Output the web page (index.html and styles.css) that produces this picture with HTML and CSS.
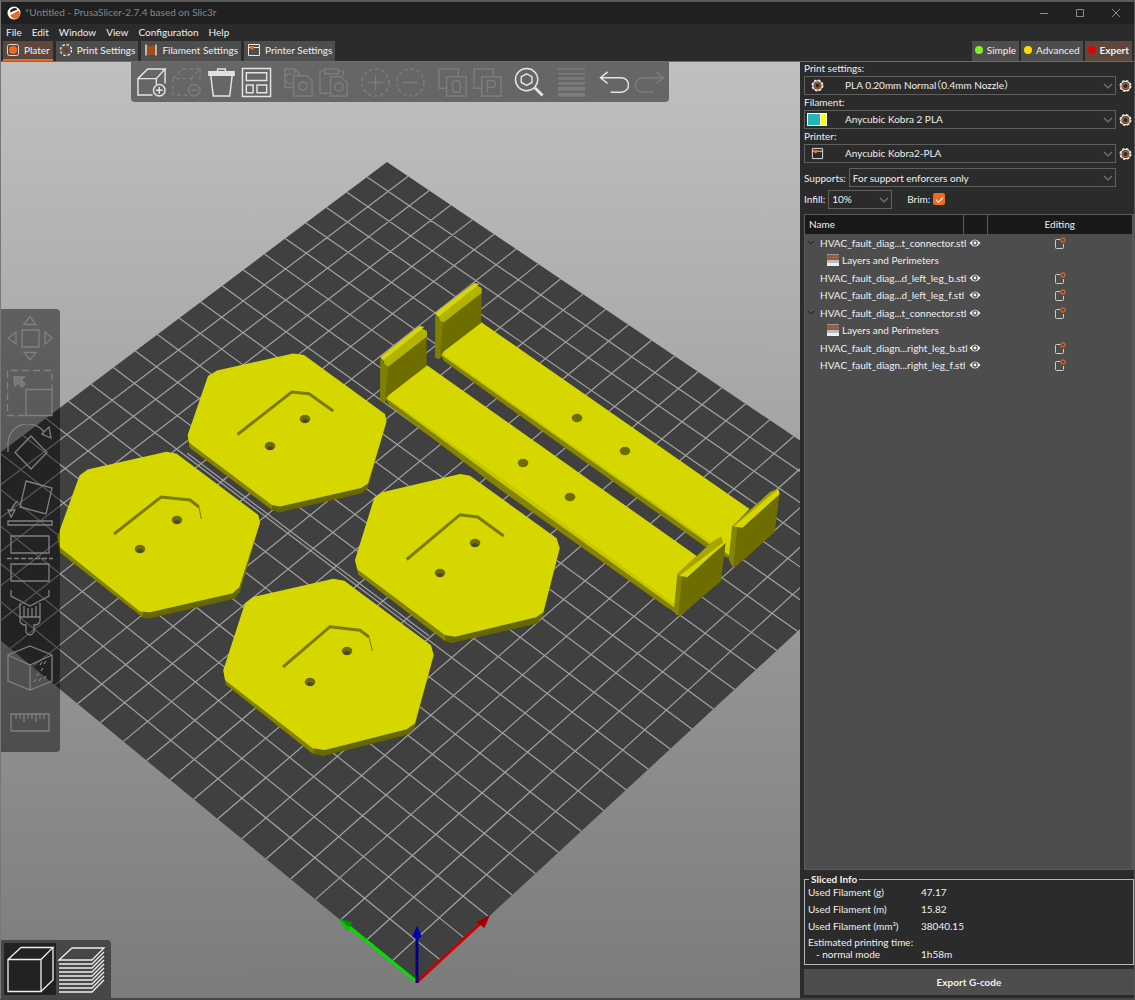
FILE: index.html
```html
<!DOCTYPE html>
<html lang="en">
<head>
<meta charset="utf-8">
<title>*Untitled - PrusaSlicer-2.7.4 based on Slic3r</title>
<link rel="stylesheet" href="styles.css">
</head>
<body>
<svg class="defs" aria-hidden="true">
  <symbol id="chev" viewBox="0 0 10 6"><path d="M1 1l4 4 4-4" fill="none" stroke="currentColor" stroke-width="1.200"/></symbol>
  <symbol id="gear" viewBox="0 0 14 14"><circle cx="7" cy="7" r="5.8" fill="none" stroke="#eee" stroke-width="1.4" stroke-dasharray="2.6 1.95"/><circle cx="7" cy="7" r="4.900" fill="none" stroke="#eee" stroke-width="1.300"/><circle cx="7" cy="7" r="3" fill="#2b2b2b" stroke="#a4562c" stroke-width="1.8"/></symbol>
  <symbol id="printer" viewBox="0 0 14 14"><path d="M1.5 1.5h11v11h-11zM1.500 4.500h11" fill="none" stroke="#e8e8e8"/><path d="M3 3h4v2.500l-2 1.500-2-1.500z" fill="#ed6b21"/></symbol>
  <symbol id="eye" viewBox="0 0 12 10"><path d="M.5 5Q6-2 11.500 5Q6 12 .5 5z" fill="#f4f4f4"/><circle cx="6" cy="5" r="2.700" fill="#4d4d4d"/><circle cx="6" cy="5" r="1.400" fill="#f4f4f4"/></symbol>
  <symbol id="edit" viewBox="0 0 12 12"><path d="M6 2.500H2.500Q1.500 2.500 1.500 3.500V10.500Q1.500 11.500 2.500 11.500H8.500Q9.500 11.500 9.500 10.500V7" fill="none" stroke="#ccc"/><circle cx="9" cy="3" r="2" fill="none" stroke="#c8602a" stroke-width="1.500"/></symbol>
  <symbol id="layers" viewBox="0 0 12 12"><path d="M0 0h12v1H0z" fill="#999"/><path d="M0 1h12v5H0z" fill="#98593a"/><path d="M0 3h12v1H0z" fill="#a8603c"/><path d="M0 6h12v3H0z" fill="#bbb"/><path d="M0 9h12v3H0z" fill="#eee"/></symbol>
</svg>
<div class="window">
  <header class="titlebar">
    <svg class="logo" viewBox="0 0 14 14"><circle cx="7" cy="7" r="6.500" fill="#fff"/><path d="M3 6.500A4.300 4.300 0 0 1 10.500 3.500z" fill="#222"/><path d="M3 9.500L11.500 4.500A4.600 4.600 0 0 1 5 11.500z" fill="#ed6b21"/></svg>
    <span class="title">*Untitled - PrusaSlicer-2.7.4 based on Slic3r</span>
    <div class="winctl">
      <button aria-label="Minimize"><svg viewBox="0 0 10 10"><path d="M1 5.500h8"/></svg></button>
      <button aria-label="Maximize"><svg viewBox="0 0 10 10"><path d="M1.500 1.500h7v7h-7z"/></svg></button>
      <button aria-label="Close"><svg viewBox="0 0 10 10"><path d="M1 1l8 8M9 1l-8 8"/></svg></button>
    </div>
  </header>
  <nav class="menubar">
    <a href="#">File</a><a href="#">Edit</a><a href="#">Window</a><a href="#">View</a><a href="#">Configuration</a><a href="#">Help</a>
  </nav>
  <div class="tabbar">
    <button class="tab active"><svg viewBox="0 0 14 14"><rect x="1.500" y="1.500" width="11" height="11" rx="2" fill="none" stroke="#ddd"/><circle cx="7" cy="7" r="4" fill="#ed6b21"/></svg>Plater</button>
    <button class="tab"><svg viewBox="0 0 14 14"><circle cx="7" cy="7" r="5.500" fill="none" stroke="#eee" stroke-dasharray="2.600 1.700" stroke-width="1.300"/><circle cx="7" cy="7" r="3.600" fill="#5c4638" stroke="#85533a"/></svg>Print Settings</button>
    <button class="tab"><svg viewBox="0 0 14 14"><path d="M3 3h8v9H3z" fill="#a04e1e"/><path d="M2 1.500v11M12 1.500v11" stroke="#eee" stroke-width="1.300"/></svg>Filament Settings</button>
    <button class="tab"><svg><use href="#printer"/></svg>Printer Settings</button>
    <div class="modes">
      <button class="tab mode"><i class="dot green"></i>Simple</button>
      <button class="tab mode"><i class="dot yellow"></i>Advanced</button>
      <button class="tab mode expert"><i class="dot red"></i>Expert</button>
    </div>
  </div>
  <main class="body">
    <section class="view">
      <svg class="scene" viewBox="1 62 799 936" preserveAspectRatio="xMidYMid slice">
        <polygon points="387,162 918,520 417,983 -119,542" fill="#404040"/>
        <path id="grid" fill="none" stroke="#a2a2a2" stroke-width="1.200"/>
        <g id="plates">
          <path fill="#676700" d="M187.700 435L189.500 447.500 272 510 279 512.500 363 493 368 487 386.500 421.500 279 480z"/>
          <path fill="#838300" d="M187.700 435L189.500 447.500 272 510V500z"/>
          <path class="top" d="M208 376L217 370.500 293 353.500 304 355 385 414 386.500 421.500 368 483.500 361 488 280 506.500 272 505 189 442.500 187.700 435z"/>
          <path fill="#676700" d="M57.300 537L60 552.500 143 617.500 149.500 618.500 235 598.500 240 592 260 523 150 590z"/>
          <path fill="#838300" d="M57.300 537L60 552.500 143 617.500V605z"/>
          <path class="top" d="M79.500 475.500L87.500 469.500 166.500 451.700 176.700 453.700 258.300 515 260 522.700 239.300 587.300 232.700 593.300 150 612.300 140 611.500 59.500 547 57.300 537z"/>
          <path fill="#676700" d="M355 560L358.300 574.500 445 641 452 643 537 623.500 543 616 559.700 548.300 450 610z"/>
          <path fill="#838300" d="M355 560L358.300 574.500 445 641V625z"/>
          <path class="top" d="M374.300 497.700L382.300 492.300 460 474 470 475.700 556.700 538.300 559.700 548.300 543.300 612.300 536 617.300 455 636.700 445 635 357.300 569.300 355 560z"/>
          <path fill="#676700" d="M223.300 670L226 684.500 313.300 754 323.300 756 408.300 734.500 414.300 728.500 433.700 655 320 720z"/>
          <path fill="#838300" d="M223.300 670L226 684.500 313.300 754V740z"/>
          <path class="top" d="M245 603.300L253.300 597 333.300 578.700 344.300 580.700 431 645.300 433.700 655 415 723.300 406.700 729.300 325 750 312.700 748.300 225 680 223.300 670z"/>
        </g>
        <g fill="none" stroke="#7b7b00" stroke-width="3">
          <path d="M237.500 434.500L291.700 392 309 393.700 333.300 411"/>
          <path d="M114 534L161 497 190 500 199 507"/>
          <path d="M406.700 559.500L460 514.700 477.700 517 503.700 536"/>
          <path d="M283 667L330 626.700 360 630.300 369 637"/>
          <path stroke-width="1" d="M199 507L201.300 519M369 637L372.300 651"/>
        </g>
        <g id="arm-back">
          <path fill="#848400" d="M440 354L444 361 540 430 705 546.500 728 558 740 530 481 330z"/>
          <path fill="#c8c800" d="M440 354L715 548 735 545 481 330z"/>
          <path class="top" d="M481 322L749.500 509 732 527 730 556 715 545 441 353z"/>
          <path fill="#808000" d="M435.300 313L440 321 443.500 322.500V352L439.500 359 435 357.700z"/>
          <path fill="#6e6e00" d="M443 322.500L481.700 292 481 323 443 352 440 354.500z"/>
          <path fill="#b2b200" d="M438 316L476 285 481.700 288V293L443.500 322.500 440 321z"/>
          <path class="top" d="M435.300 313L474.300 283 479.300 284 438 317z"/>
          <path fill="#858500" d="M732.300 526L742 528 735 567.300 732 566 728.500 559z"/>
          <path fill="#6e6e00" d="M737 528L742.700 527.500 779.500 493.500 774.700 532 735 567.300 733.500 566.500z"/>
          <path fill="#a6a600" d="M732 526L770.700 491.500 778 489 737 526z"/>
          <path class="top" d="M734 526.500L778.300 489 779.700 494 742.500 527.800z"/>
        </g>
        <g id="arm-front">
          <path fill="#848400" d="M385 398L390 406 500 489.500 667 607.500 674.500 611 680 590 427 373z"/>
          <path fill="#c8c800" d="M385 397.500L500 482 675 608 690 580 427 372z"/>
          <path class="top" d="M426.700 365L696.700 556 677.500 574 674.500 604 500 477 386 397z"/>
          <path fill="#808000" d="M380.300 357L385 365 388.500 366.500V395.500L384.500 402.500 380 401z"/>
          <path fill="#6e6e00" d="M388 366.500L426.700 336 426.500 366 388 395.500 385 398z"/>
          <path fill="#b2b200" d="M383 360L421 328 427 331V336.500L388.500 366.500 385 365z"/>
          <path class="top" d="M380.300 357L419.300 326 424.300 327 383 360.500z"/>
          <path fill="#858500" d="M677.300 574L687 577 680 615.700 676 614.500 674 609z"/>
          <path fill="#6e6e00" d="M682 577L687.300 577 725.700 542.700 721 581 680 615.700 678.500 615z"/>
          <path fill="#a6a600" d="M677 574L713 541 721.500 536.500 723 543 682 577z"/>
          <path class="top" d="M680 575.500L722.500 543 725.700 542.500 687.300 577.300z"/>
        </g>
        <g fill="#6c6c00" id="holes"></g>
        <g stroke-width="3" fill="none">
          <path stroke="#00e000" d="M417 982L347 925"/><path stroke="#c80000" d="M417 982L482 922"/>
        </g>
        <path fill="#009800" d="M339 918.500L352.500 922.500 347 930.500z"/><path fill="#00c800" d="M339 918.500L350 928 346.500 931z"/>
        <path fill="#a00000" d="M490 915L484.500 928 476 922z"/>
        <path stroke="#000080" stroke-width="3" d="M417 983V936"/><path fill="#0000b4" d="M417 925.500L421.500 936.500Q417 941 412.500 936.500z"/>
      </svg>

      <div class="toolbar" role="toolbar" aria-label="Main toolbar">
        <div class="group">
          <button aria-label="Add"><svg viewBox="0 0 32 32"><path d="M17 29H2V12H21V18M2 12L12 2H30L21 12M30 2V17"/><circle cx="24" cy="24" r="6"/><path d="M24 20.500v7M20.500 24h7"/></svg></button>
          <button class="off" aria-label="Delete"><svg viewBox="0 0 32 32"><path stroke-dasharray="4 3" d="M17 29H2V12H21V18M2 12L12 2H30L21 12M30 2V17"/><circle cx="24" cy="24" r="6"/><path d="M20.500 24h7"/></svg></button>
          <button aria-label="Delete all"><svg viewBox="0 0 32 32"><path d="M5 9L7.500 30H24.500L27 9"/><path d="M3 8.500V5H29V8.500z" fill="#ddd"/><path d="M12 4.500V2H20V4.500"/></svg></button>
          <button aria-label="Arrange"><svg viewBox="0 0 32 32"><path d="M1.500 1.500h29v29h-29zM5.500 6h21v8h-21zM5.500 18.500h7v8h-7zM16.500 18.500h10v8h-10z"/></svg></button>
        </div>
        <div class="group off">
          <button aria-label="Copy"><svg viewBox="0 0 32 32"><path d="M11 21H2V2H12L17 7V9M17 9H11V30H30V14L25 9H17M12 2V7M10 8A5 5 0 1 0 10 16"/><path d="M20.500 15l4 2.300v4.700l-4 2.300-4-2.300v-4.700z"/></svg></button>
          <button aria-label="Paste"><svg viewBox="0 0 32 32"><path d="M12 27H2V4H7M21 4H26V9M7 2H21V7H7zM13 10H24L30 16V30H13z"/><path d="M21.500 16l4 2.300v4.700l-4 2.300-4-2.300v-4.700z"/></svg></button>
        </div>
        <div class="group off">
          <button aria-label="Add instance"><svg viewBox="0 0 32 32"><circle cx="16" cy="16" r="14" stroke-dasharray="4 2.500"/><path d="M16 8v16M8 16h16"/></svg></button>
          <button aria-label="Remove instance"><svg viewBox="0 0 32 32"><circle cx="16" cy="16" r="14" stroke-dasharray="4 2.500"/><path d="M8 16h16"/></svg></button>
        </div>
        <div class="group off">
          <button aria-label="Split to objects"><svg viewBox="0 0 32 32"><path d="M10 22H2V2H22V9M10 10H30V30H10z"/><rect x="16" y="14" width="8" height="12" rx="3"/></svg></button>
          <button aria-label="Split to parts"><svg viewBox="0 0 32 32"><path d="M10 22H2V2H22V9M10 10H30V30H10zM16 27V14H21Q24 14 24 17.500T21 21H16"/></svg></button>
        </div>
        <div class="group">
          <button aria-label="Search"><svg viewBox="0 0 32 32"><circle cx="13" cy="13" r="11.500"/><path d="M13 7l5.500 3v6L13 19l-5.500-3v-6z"/><path d="M21.500 21.500l8 8" stroke-width="3"/></svg></button>
        </div>
        <div class="group off">
          <button aria-label="Variable layer height"><svg viewBox="0 0 32 32"><path d="M2 2h28M2 7h28"/><path stroke-width="2.500" d="M2 12h28M2 17h28"/><path stroke-width="4" d="M2 22.500h28M2 28.500h28"/></svg></button>
        </div>
        <div class="group">
          <button aria-label="Undo"><svg viewBox="0 0 32 32"><path d="M10 5L2.500 11 10 17M2.500 11H24a7.500 7.500 0 0 1 0 15H13"/></svg></button>
          <button class="off" aria-label="Redo"><svg viewBox="0 0 32 32"><path d="M24 5l7.500 6L24 17M31.500 11H10a7.500 7.500 0 0 0 0 15H21"/></svg></button>
        </div>
      </div>

      <div class="gizmos" role="toolbar" aria-label="Gizmos">
        <button aria-label="Move"><svg viewBox="0 0 48 48"><path d="M16 16h17v17H16zM18 10.500L24 2.500 30 10.500zM18 38.500h12L24 46zM10 18v12L2 24zM39 18v12L46 24z"/></svg></button>
        <button aria-label="Scale"><svg viewBox="0 0 48 48"><path d="M20 20.500h26v26H20z"/><path stroke-dasharray="7 4" d="M19 46.500H1.500V1.500H46V20"/><path fill="#777" d="M8 8h10l-3 3 4 4-3 3-4-4-3 3z"/></svg></button>
        <button aria-label="Rotate"><svg viewBox="0 0 48 48"><path d="M25 12L41 28.500 25 45 9 28.500zM2 28V22A20 20 0 0 1 38 8M36 10L43 3 45 14z"/></svg></button>
        <button aria-label="Place on face"><svg viewBox="0 0 48 48"><path d="M20 2L46 9 40 35 14 28zM2 42h44v4H2zM12 22Q6 26 5 33M2 31h7L5 38z"/></svg></button>
        <button aria-label="Cut"><svg viewBox="0 0 48 48"><path d="M5 2h38v17H5zM5 30h38v17H5z"/><path stroke-dasharray="5 2" d="M1 24.500h46"/></svg></button>
        <button aria-label="Paint supports"><svg viewBox="0 0 48 48"><path d="M5 1V7L24 17 43 7V1M14 14V32Q15 36 20 36V43Q24 49 28 43V36Q33 36 34 32V14M14 28H34M18 17V28M22 19V28M26 19V28M30 17V28"/></svg></button>
        <button aria-label="Seam painting"><svg viewBox="0 0 48 48"><path d="M24 2L46 11V37L24 46 2 37V11zM2 11L24 21 46 11M24 21V46M34 21l2-3M38 20l2-3M35 27l2-3M31 32l2-3M28 38l2-3M33 37l2-3M38 35l2-3"/></svg></button>
        <button aria-label="Measure"><svg viewBox="0 0 48 48"><path d="M5 15h38v17H5zM10 15v5M14 15v5M18 15v8M22 15v5M26 15v5M30 15v8M34 15v5M38 15v5"/></svg></button>
      </div>

      <div class="viewmode">
        <button class="on" aria-label="3D editor view"><svg viewBox="0 0 52 52"><path d="M4 16.500H37V48.500H4zM4 16.500L17 4.500H49L37 16.500M49 4.500V37L37 48.500"/></svg></button>
        <button aria-label="Preview"><svg viewBox="0 0 52 52"><path d="M2 17L15 5H47L35 17z"/><path d="M2 21H35L47 9M2 25H35L47 13M2 29H35L47 17M2 33H35L47 21M2 37H35L47 25M2 41H35L47 29M2 45H35L47 33M2 49H35L47 37"/></svg></button>
      </div>
    </section>

    <aside class="panel">
      <form class="settings" onsubmit="return false">
        <label for="print">Print settings:</label>
        <div class="line"><div class="combo"><svg class="lead"><use href="#gear"/></svg><select id="print"><option>PLA 0.20mm Normal（0.4mm Nozzle）</option></select><svg class="chev"><use href="#chev"/></svg></div><button class="cog" aria-label="Edit print settings"><svg><use href="#gear"/></svg></button></div>
        <label for="filament">Filament:</label>
        <div class="line"><div class="combo"><span class="lead swatch"></span><select id="filament"><option>Anycubic Kobra 2 PLA</option></select><svg class="chev"><use href="#chev"/></svg></div><button class="cog" aria-label="Edit filament"><svg><use href="#gear"/></svg></button></div>
        <label for="printerSel">Printer:</label>
        <div class="line"><div class="combo"><svg class="lead"><use href="#printer"/></svg><select id="printerSel"><option>Anycubic Kobra2-PLA</option></select><svg class="chev"><use href="#chev"/></svg></div><button class="cog" aria-label="Edit printer"><svg><use href="#gear"/></svg></button></div>
        <div class="line supports"><label for="supports">Supports:</label><div class="combo plain"><select id="supports"><option>For support enforcers only</option></select><svg class="chev"><use href="#chev"/></svg></div></div>
        <div class="line infill"><label for="infill">Infill:</label><div class="combo plain small"><select id="infill"><option>10%</option></select><svg class="chev"><use href="#chev"/></svg></div><label class="brim" for="brim">Brim:</label><input type="checkbox" id="brim" checked></div>
      </form>
      <div class="objects">
        <table>
          <thead><tr><th class="name">Name</th><th class="vis"></th><th class="ed">Editing</th></tr></thead>
          <tbody>
            <tr><td><svg class="exp"><use href="#chev"/></svg>HVAC_fault_diag...t_connector.stl</td><td><svg class="eye"><use href="#eye"/></svg></td><td><svg class="edit"><use href="#edit"/></svg></td></tr>
            <tr><td class="sub"><svg class="lay"><use href="#layers"/></svg>Layers and Perimeters</td><td></td><td></td></tr>
            <tr><td>HVAC_fault_diag...d_left_leg_b.stl</td><td><svg class="eye"><use href="#eye"/></svg></td><td><svg class="edit"><use href="#edit"/></svg></td></tr>
            <tr><td>HVAC_fault_diag...d_left_leg_f.stl</td><td><svg class="eye"><use href="#eye"/></svg></td><td><svg class="edit"><use href="#edit"/></svg></td></tr>
            <tr><td><svg class="exp"><use href="#chev"/></svg>HVAC_fault_diag...t_connector.stl</td><td><svg class="eye"><use href="#eye"/></svg></td><td><svg class="edit"><use href="#edit"/></svg></td></tr>
            <tr><td class="sub"><svg class="lay"><use href="#layers"/></svg>Layers and Perimeters</td><td></td><td></td></tr>
            <tr><td>HVAC_fault_diagn...right_leg_b.stl</td><td><svg class="eye"><use href="#eye"/></svg></td><td><svg class="edit"><use href="#edit"/></svg></td></tr>
            <tr><td>HVAC_fault_diagn...right_leg_f.stl</td><td><svg class="eye"><use href="#eye"/></svg></td><td><svg class="edit"><use href="#edit"/></svg></td></tr>
          </tbody>
        </table>
      </div>
      <fieldset class="sliced">
        <legend>Sliced Info</legend>
        <dl>
          <dt>Used Filament (g)</dt><dd>47.17</dd>
          <dt>Used Filament (m)</dt><dd>15.82</dd>
          <dt>Used Filament (mm³)</dt><dd>38040.15</dd>
        </dl>
        <dl class="time">
          <dt class="wide">Estimated printing time:</dt>
          <dt class="indent">- normal mode</dt><dd>1h58m</dd>
        </dl>
      </fieldset>
      <button class="export">Export G-code</button>
    </aside>
  </main>
</div>
<script src="scene.js"></script>
</body>
</html>
```

FILE: styles.css
```css
* { box-sizing: border-box; }
body {
  margin: 0;
  background: #3a3a3a;
  color: #f0f0f0;
  font: 10px/14px Lato, "Noto Sans CJK SC", sans-serif;
}
button, select, input { font: inherit; color: inherit; margin: 0; }
button { border: 0; padding: 0; background: none; }
svg { display: block; flex: none; }
.defs { position: absolute; width: 0; height: 0; }

.window {
  display: flex;
  flex-direction: column;
  height: 100vh;
  border-style: solid;
  border-width: 2px 1px 2px;
  border-color: #5a5a5a #555 #454545 #777;
  background: #2b2b2b;
}
.titlebar { display: flex; align-items: center; height: 22px; padding-left: 6px; background: #202020; color: #868686; }
.logo { width: 14px; height: 14px; margin-right: 4px; }
.title { padding-bottom: 2px; }
.winctl { display: flex; margin-left: auto; }
.winctl button { width: 36px; height: 22px; display: grid; place-items: center; }
.winctl svg { width: 10px; height: 10px; fill: none; stroke: #8a8a8a; }

.menubar { display: flex; align-items: center; height: 17px; gap: 10px; padding: 0 0 2px 5px; }
.menubar a { color: #f0f0f0; text-decoration: none; }

.tabbar { display: flex; gap: 3px; height: 21px; padding: 0 2px; border-bottom: 1px solid #c2501d; }
.tab { display: flex; align-items: center; gap: 4px; height: 20px; padding: 0 3px 2px; background: #4d4d4d; }
.tab svg { width: 14px; height: 14px; }
.tab.active { background: #5e483e; box-shadow: inset 0 -2px #ed6b21; }
.modes { display: flex; gap: 2px; margin-left: auto; }
.expert { background: #5e483e; font-weight: 700; }
.dot { width: 8px; height: 8px; border-radius: 4px; }
.green { background: #7df028; }
.yellow { background: #ffdc00; }
.red { background: #e70000; }

.body { display: flex; flex: 1; min-height: 0; }
.view { position: relative; flex: 1; min-width: 0; overflow: hidden; background: linear-gradient(#c0c0c0, #7b7b7b); }
.scene { width: 100%; height: 100%; }
.top { fill: #d7d700; }

.toolbar { position: absolute; top: 0; left: 130px; display: flex; gap: 7px; padding: 2px 3px; height: 40px; background: #666; border-radius: 0 0 4px 4px; }
.group { display: flex; }
.toolbar button { width: 35px; height: 36px; display: grid; place-items: center; }
.toolbar svg { width: 31px; height: 31px; fill: none; stroke: #e4e4e4; stroke-width: 1.500; }
.toolbar .off svg { stroke: #7c7c7c; }

.gizmos { position: absolute; top: 247px; left: 0; display: flex; flex-direction: column; padding: 1px 5px 2px 4px; background: rgba(0, 0, 0, .45); border-radius: 0 4px 4px 0; }
.gizmos button { width: 50px; height: 55px; display: grid; place-items: center; }
.gizmos svg { width: 48px; height: 48px; fill: none; stroke: #808080; stroke-width: 1.300; }

.viewmode { position: absolute; bottom: 0; left: 0; display: flex; gap: 1px; padding: 3px 2px 3px 3px; height: 58px; background: #474747; border-radius: 0 4px 0 0; }
.viewmode button { width: 52px; height: 52px; }
.viewmode .on { background: #222; }
.viewmode svg { width: 52px; height: 52px; fill: none; stroke: #eee; stroke-width: 1.300; }

.panel { display: flex; flex-direction: column; width: 334px; flex: none; padding-left: 4px; background: #2b2b2b; }
.settings { display: flex; flex-direction: column; }
.settings > label { height: 14px; line-height: 12px; }
.line { display: flex; align-items: center; gap: 3px; height: 20px; padding-right: 2px; }
.settings > .line { height: 19px; }
.settings > label + .line + label { height: 15px; line-height: 14px; }
.combo { position: relative; flex: 1; height: 19px; }
.combo select { display: block; width: 100%; height: 19px; padding: 0 16px 2px 40px; border: 1px solid #606060; border-radius: 0; background: #2b2b2b; appearance: none; color: #f0f0f0; }
#print { font-feature-settings: "halt"; }
.combo .lead { position: absolute; left: 7px; top: 3px; width: 13px; height: 13px; }
.combo .swatch { left: 3px; width: 20px; background: linear-gradient(90deg, #26b4b8 0 12px, #fff 12px 13px, #ff0 13px); border: 1px solid #fff; }
.combo .chev { position: absolute; right: 3px; top: 7px; width: 10px; height: 6px; color: #777; }
.combo.plain select { padding: 0 16px 0 3px; }
.cog { width: 13px; height: 14px; }
.cog svg { width: 13px; height: 14px; }
.settings .supports { height: 21px; margin-top: 4px; padding-right: 18px; }
.settings .infill { height: 22px; }
.small { flex: none; width: 64px; }
.brim { margin-left: 12px; }
#brim { appearance: none; width: 12px; height: 12px; border-radius: 2px; background: #ed6b21; display: grid; place-items: center; }
#brim::before { content: ""; width: 6px; height: 3px; border: solid #fff; border-width: 0 0 1px 1px; transform: rotate(-45deg); }

.objects { flex: 1; margin-top: 4px; border: 1px solid #5a5a5a; border-right-width: 2px; background: #4d4d4d; }
table { width: 100%; table-layout: fixed; border-collapse: collapse; }
th { height: 19px; padding: 0 0 2px; background: #191919; font-weight: 400; border-right: 1px solid #5a5a5a; }
th:last-child { border-right: 0; }
.name { width: 158px; padding-left: 4px; text-align: left; }
.vis { width: 24px; }
td { position: relative; height: 18px; padding: 0 0 0 15px; line-height: 14px; white-space: nowrap; }
tr:nth-child(odd) td { height: 17px; }
td + td { padding: 0; }
td .eye { width: 12px; height: 10px; margin: auto; }
td .edit { width: 12px; height: 12px; margin: auto; }
.exp { position: absolute; left: 2px; top: 6px; width: 8px; height: 5px; color: #1c1c1c; }
td.sub { padding-left: 37px; }
.lay { position: absolute; left: 22px; top: 3px; width: 12px; height: 12px; }

.sliced { margin: 3px 0 0; padding: 0 3px 4px; border: 1px solid #b8b8b8; min-width: 0; }
.sliced legend { margin-left: 1px; padding: 0 2px; font-weight: 700; line-height: 13px; }
dl { display: grid; grid-template-columns: 113px 1fr; row-gap: 3px; margin: 0; line-height: 14px; }
dd { margin: 0; }
.sliced dl:first-of-type { margin-top: -1px; }
.time { row-gap: 0; margin-top: 3px; line-height: 12px; }
.wide { grid-column: 1 / 3; }
.indent { padding-left: 8px; }
.export { height: 26px; margin: 4px 0 3px; background: #4d4d4d; font-weight: 700; }
```

FILE: scene.js
```javascript
// Corners of the print bed on screen: origin, +X, opposite, +Y
const corners = [[417, 983], [918, 520], [387, 162], [-119, 542]];
const cells = 23;

// Perspective map from the unit square to the bed corners
function perspective([[x0, y0], [x1, y1], [x2, y2], [x3, y3]]) {
  const sx = x0 - x1 + x2 - x3, sy = y0 - y1 + y2 - y3;
  const ax = x1 - x2, ay = y1 - y2, bx = x3 - x2, by = y3 - y2;
  const den = ax * by - bx * ay;
  const g = (sx * by - bx * sy) / den;
  const h = (ax * sy - sx * ay) / den;
  return (u, v) => {
    const w = 1 + g * u + h * v;
    return [
      (x0 + (x1 - x0 + g * x1) * u + (x3 - x0 + h * x3) * v) / w,
      (y0 + (y1 - y0 + g * y1) * u + (y3 - y0 + h * y3) * v) / w
    ].map(n => n.toFixed(1)).join(" ");
  };
}

const at = perspective(corners);
let d = "";
for (let i = 1; i < cells; i++) {
  const t = i / cells;
  d += `M${at(t, 0)}L${at(t, 1)}M${at(0, t)}L${at(1, t)}`;
}
// Short second line beside the ninth one, in the gap between the plates
d += `M${at(9.12 / cells, .35)}L${at(9.12 / cells, .81)}`;
document.getElementById("grid").setAttribute("d", d);

// Screw holes
const holes = [[305, 419], [270, 446], [177, 520], [140, 549], [475, 543], [440, 573],
  [347, 651], [310, 682], [577, 418], [625, 451], [523, 463], [570, 497]];
document.getElementById("holes").innerHTML = holes.map(([x, y], i) =>
  `<ellipse cx="${x}" cy="${y}" rx="5.300" ry="4.200"/>` +
  (i < 8 ? `<ellipse cx="${x}" cy="${y + 2}" rx="3" ry="1.800" fill="#444"/>` : "")
).join("");
```
